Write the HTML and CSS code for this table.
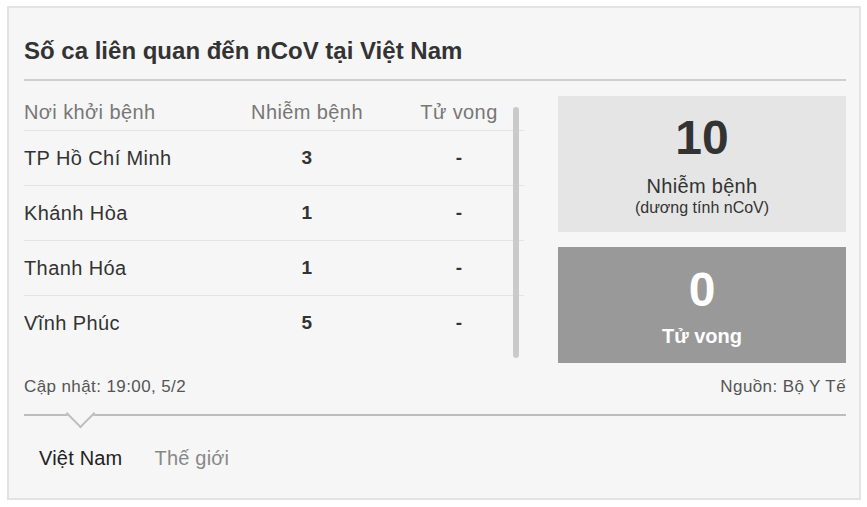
FILE: index.html
```html
<!DOCTYPE html>
<html lang="vi">
<head>
<meta charset="utf-8">
<title>Số ca liên quan đến nCoV tại Việt Nam</title>
<link rel="stylesheet" href="styles.css">
</head>
<body>
<div class="card">
  <h2 class="title">Số ca liên quan đến nCoV tại Việt Nam</h2>
  <div class="content">
    <div class="table-wrap">
      <div class="table">
        <div class="row head">
          <div class="c1">Nơi khởi bệnh</div>
          <div class="c2">Nhiễm bệnh</div>
          <div class="c3">Tử vong</div>
        </div>
        <div class="row">
          <div class="c1">TP Hồ Chí Minh</div>
          <div class="c2 num">3</div>
          <div class="c3 num">-</div>
        </div>
        <div class="row">
          <div class="c1">Khánh Hòa</div>
          <div class="c2 num">1</div>
          <div class="c3 num">-</div>
        </div>
        <div class="row">
          <div class="c1">Thanh Hóa</div>
          <div class="c2 num">1</div>
          <div class="c3 num">-</div>
        </div>
        <div class="row last">
          <div class="c1">Vĩnh Phúc</div>
          <div class="c2 num">5</div>
          <div class="c3 num">-</div>
        </div>
      </div>
      <div class="scrollbar"></div>
    </div>
    <div class="stats">
      <div class="box box-cases">
        <div class="big">10</div>
        <div class="label">Nhiễm bệnh</div>
        <div class="sub">(dương tính nCoV)</div>
      </div>
      <div class="box box-deaths">
        <div class="big">0</div>
        <div class="label bold">Tử vong</div>
      </div>
    </div>
  </div>
  <div class="footer">
    <span>Cập nhật: 19:00, 5/2</span>
    <span>Nguồn: Bộ Y Tế</span>
  </div>
  <div class="tabs">
    <div class="tab active">Việt Nam</div>
    <div class="tab">Thế giới</div>
  </div>
</div>
</body>
</html>
```
FILE: styles.css
```css
html, body {
  margin: 0;
  padding: 0;
  background: #ffffff;
}
body {
  font-family: "Liberation Sans", Arial, sans-serif;
  color: #333;
}
.card {
  box-sizing: border-box;
  margin: 6px 0 0 7px;
  width: 854px;
  height: 494px;
  border: 2px solid #e3e3e3;
  background: #f6f6f6;
  padding: 28px 13px 0 15px;
}
.title {
  margin: 0;
  font-size: 24px;
  line-height: 30px;
  font-weight: bold;
  color: #333;
  padding-bottom: 13px;
  border-bottom: 2px solid #cfcfcf;
}
.content {
  display: flex;
  gap: 34px;
}
.table-wrap {
  position: relative;
  width: 500px;
  height: 277px;
}
.table {
  width: 500px;
}
.row {
  display: grid;
  grid-template-columns: 200px 166px 134px;
  align-items: center;
  height: 54px;
  border-bottom: 1px solid #e4e4e4;
  font-size: 20px;
  line-height: 24px;
  letter-spacing: 0.4px;
  color: #333;
}
.row.last {
  border-bottom: none;
}
.row.head {
  height: auto;
  padding: 19px 0 6px;
  color: #777;
}
.c2, .c3 {
  text-align: center;
}
.c3 {
  padding-left: 4px;
}
.num {
  font-weight: bold;
  font-size: 19px;
}
.scrollbar {
  position: absolute;
  left: 489px;
  top: 26px;
  width: 6px;
  height: 251px;
  border-radius: 3px;
  background: #cacaca;
}
.stats {
  width: 288px;
  padding-top: 15px;
  display: flex;
  flex-direction: column;
  gap: 15px;
}
.box {
  text-align: center;
}
.box-cases {
  background: #e5e5e5;
  color: #333;
  height: 136px;
  box-sizing: border-box;
  padding-top: 17px;
}
.box-deaths {
  background: #999999;
  color: #fff;
  height: 116px;
  box-sizing: border-box;
  padding-top: 18px;
}
.big {
  font-size: 48px;
  line-height: 50px;
  font-weight: bold;
}
.box-cases .label {
  margin-top: 11px;
}
.label {
  font-size: 20px;
  line-height: 24px;
  letter-spacing: 0.3px;
}
.label.bold {
  font-weight: bold;
  margin-top: 9px;
  letter-spacing: 0;
}
.sub {
  font-size: 16px;
  line-height: 18px;
  margin-top: 1px;
}
.footer {
  display: flex;
  justify-content: space-between;
  margin-top: 14px;
  font-size: 17px;
  line-height: 20px;
  letter-spacing: 0.4px;
  color: #555;
}
.tabs {
  margin-top: 17px;
  border-top: 2px solid #bdbdbd;
  display: flex;
  gap: 32px;
  padding-left: 15px;
}
.tab {
  position: relative;
  padding-top: 30px;
  font-size: 20px;
  line-height: 24px;
  letter-spacing: 0.2px;
  color: #888;
}
.tab.active {
  color: #222;
}
.tab.active::before {
  content: "";
  position: absolute;
  left: 50%;
  top: -13px;
  width: 21px;
  height: 21px;
  margin-left: -10.5px;
  box-sizing: border-box;
  background: #f6f6f6;
  border-right: 2px solid #bdbdbd;
  border-bottom: 2px solid #bdbdbd;
  transform: rotate(45deg);
}
```
